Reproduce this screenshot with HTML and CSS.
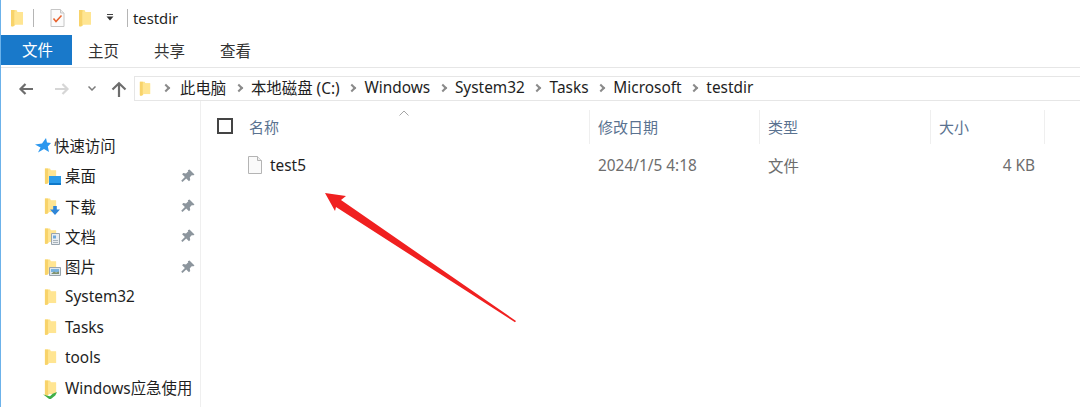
FILE: index.html
```html
<!DOCTYPE html>
<html lang="zh-CN">
<head>
    <meta charset="UTF-8">
    <title>testdir</title>
    <link rel="stylesheet" href="styles.css">
</head>
<body>

<svg class="defs" width="0" height="0">
    <defs>
        <symbol id="folder" viewBox="0 0 14 18">
            <path d="M1 1h5.500l1 2h5.500v12.500h-7.500l-2 2h-1.500l-1-.5z" fill="#fde58f"/>
            <path d="M1 1h3.500v15.500l-2.500 1-1-.5z" fill="#f8d36a"/>
            <path d="M4.500 3h8.500v12.500h-8.500z" fill="#ffe592"/>
        </symbol>
        <symbol id="pin" viewBox="0 0 14 14">
            <path d="M8.500 .5l5 5-1.500 1-1-.5-2.200 2.300.4 2.700-1.200 1.200-2.800-2.800-3.700 3.700-1.300-1.300 3.700-3.700-2.800-2.800 1.200-1.200 2.700.4 2.300-2.200-.5-1z" fill="#8c959d"/>
        </symbol>
    </defs>
</svg>

<div class="title-bar">
    <svg class="tb-folder"><use href="#folder"/></svg>
    <span class="tb-sep"></span>
    <svg class="tb-check" viewBox="0 0 15 18">
        <path d="M1 .5h9.500l3.500 3.500v13.500h-13z" fill="#fbfbfb" stroke="#c6c6c6"/>
        <path d="M10.500 .5v3.500h3.500" fill="#eee" stroke="#c6c6c6"/>
        <path d="M3.500 9.500l2.500 3 5.500-6" fill="none" stroke="#e8622d" stroke-width="1.500"/>
    </svg>
    <svg class="tb-folder2"><use href="#folder"/></svg>
    <svg class="tb-drop" viewBox="0 0 8 7">
        <path d="M1 .5h6" stroke="#444" stroke-width="1"/>
        <path d="M.5 2.500h7l-3.500 4z" fill="#333"/>
    </svg>
    <span class="tb-sep tb-sep-last"></span>
    <span class="tb-name">testdir</span>
</div>

<div class="ribbon">
    <div class="tab tab-file">文件</div>
    <div class="tab">主页</div>
    <div class="tab">共享</div>
    <div class="tab">查看</div>
</div>

<div class="nav-row">
    <svg class="nav-btn" viewBox="0 0 15 12">
        <path d="M15 6H2.500M7.500 1L2.500 6l5 5" fill="none" stroke="#6d6d6d" stroke-width="2.200"/>
    </svg>
    <svg class="nav-btn nav-forward" viewBox="0 0 15 12">
        <path d="M0 6h12.500M7.500 1l5 5-5 5" fill="none" stroke="#d6d6d6" stroke-width="2.200"/>
    </svg>
    <svg class="nav-down" viewBox="0 0 8 5">
        <path d="M.5 .5L4 4 7.500 .5" fill="none" stroke="#7c7c7c" stroke-width="1.500"/>
    </svg>
    <svg class="nav-up" viewBox="0 0 16 16">
        <path d="M8 16V2.500M1.500 8.500L8 2.200l6.500 6.300" fill="none" stroke="#6d6d6d" stroke-width="2.200"/>
    </svg>
    <div class="address">
        <svg class="addr-folder"><use href="#folder"/></svg>
        <span class="crumb-arrow crumb-first"></span>
        <span class="crumb">此电脑</span>
        <span class="crumb-arrow"></span>
        <span class="crumb">本地磁盘 (C:)</span>
        <span class="crumb-arrow"></span>
        <span class="crumb">Windows</span>
        <span class="crumb-arrow"></span>
        <span class="crumb">System32</span>
        <span class="crumb-arrow"></span>
        <span class="crumb">Tasks</span>
        <span class="crumb-arrow"></span>
        <span class="crumb">Microsoft</span>
        <span class="crumb-arrow"></span>
        <span class="crumb">testdir</span>
    </div>
</div>

<div class="main">
    <div class="sidebar">
        <div class="side-item side-head">
            <svg class="side-star" viewBox="0 0 16 15">
                <path d="M11 0l1 4.500 4 .5-3.200 3.500L14 14l-5-3-6 3.500 2.500-5L0 6.500l7-1z" fill="#2b97ee"/>
            </svg>
            <span>快速访问</span>
        </div>
        <div class="side-item">
            <span class="side-icon">
                <svg class="side-folder"><use href="#folder"/></svg>
                <svg class="badge" viewBox="0 0 12 9"><path d="M0 0h12v9H0z" fill="#2c9cea"/><path d="M0 7h12v2H0z" fill="#0e78c9"/></svg>
            </span>
            <span>桌面</span>
            <svg class="side-pin"><use href="#pin"/></svg>
        </div>
        <div class="side-item">
            <span class="side-icon">
                <svg class="side-folder"><use href="#folder"/></svg>
                <svg class="badge" viewBox="0 0 12 10"><path d="M4 0h4v4h3.500L6 10 .5 4H4z" fill="#2f86d8"/></svg>
            </span>
            <span>下载</span>
            <svg class="side-pin"><use href="#pin"/></svg>
        </div>
        <div class="side-item">
            <span class="side-icon">
                <svg class="side-folder"><use href="#folder"/></svg>
                <svg class="badge badge-doc" viewBox="0 0 9 12"><path d="M.5 .5h8v11h-8z" fill="#e9edf1" stroke="#98a4ae"/><path d="M2 2.500h3v3H2z" fill="#6fa8d8"/><path d="M2 7.500h5M2 9.500h5" stroke="#a9b3bb"/></svg>
            </span>
            <span>文档</span>
            <svg class="side-pin"><use href="#pin"/></svg>
        </div>
        <div class="side-item">
            <span class="side-icon">
                <svg class="side-folder"><use href="#folder"/></svg>
                <svg class="badge" viewBox="0 0 12 9"><path d="M.5 .5h11v8H.5z" fill="#dfe7ee" stroke="#9aa5ad"/><path d="M2 2h8v3H2z" fill="#79b3e0"/><path d="M2 7l3-2.500 2 1 3-1V7z" fill="#7f9270"/></svg>
            </span>
            <span>图片</span>
            <svg class="side-pin"><use href="#pin"/></svg>
        </div>
        <div class="side-item">
            <span class="side-icon"><svg class="side-folder"><use href="#folder"/></svg></span>
            <span>System32</span>
        </div>
        <div class="side-item">
            <span class="side-icon"><svg class="side-folder"><use href="#folder"/></svg></span>
            <span>Tasks</span>
        </div>
        <div class="side-item">
            <span class="side-icon"><svg class="side-folder"><use href="#folder"/></svg></span>
            <span>tools</span>
        </div>
        <div class="side-item">
            <span class="side-icon">
                <svg class="side-folder"><use href="#folder"/></svg>
                <svg class="badge badge-share" viewBox="0 0 16 8"><path d="M0 3l4 1.500 4 1 3-3 5-2-2 4-5 4H7z" fill="#3fae49"/></svg>
            </span>
            <span>Windows应急使用</span>
        </div>
    </div>

    <div class="content">
        <div class="list-head">
            <div class="col col-name">
                <span class="checkbox"></span>
                <span>名称</span>
                <svg class="sort-mark" viewBox="0 0 10 6"><path d="M.5 5.500L5 1l4.500 4.500" fill="none" stroke="#a5a5a5"/></svg>
            </div>
            <div class="col">修改日期</div>
            <div class="col">类型</div>
            <div class="col">大小</div>
            <div class="col-end"></div>
        </div>
        <div class="list-row">
            <div class="cell cell-name">
                <svg class="file-icon" viewBox="0 0 14 18">
                    <path d="M.5 .5h9l4 4v13H.5z" fill="#fafafa" stroke="#b4b4b4"/>
                    <path d="M9.500 .5v4h4" fill="#eee" stroke="#b4b4b4"/>
                </svg>
                <span>test5</span>
            </div>
            <div class="cell">2024/1/5 4:18</div>
            <div class="cell">文件</div>
            <div class="cell cell-size">4 KB</div>
        </div>
    </div>
</div>

<svg class="big-arrow" viewBox="0 0 1080 407">
    <path d="M325 193l21 3-5 4L516 321l-1 1.200L336 207l-1 4z" fill="#f02020"/>
</svg>

</body>
</html>
```

FILE: styles.css
```css
* {
    box-sizing: border-box;
}
html, body {
    height: 100%;
}
body {
    margin: 0;
    background-color: white;
    border-left: 1px solid #6cb2ea;
    font-family: "Noto Sans", "Noto Sans CJK SC", sans-serif;
    font-size: 15.400px;
    color: #1e1e1e;
    overflow: hidden;
    position: relative;
}
.defs {
    position: absolute;
}

/* title bar */
.title-bar {
    height: 35px;
    display: flex;
    align-items: center;
    padding-left: 9px;
}
.tb-folder, .tb-folder2 {
    width: 14px;
    height: 18px;
}
.tb-sep {
    width: 1px;
    height: 18px;
    background-color: #b5b5b5;
    margin-left: 9px;
    margin-right: 16px;
}
.tb-check {
    width: 15px;
    height: 18px;
}
.tb-folder2 {
    margin-left: 13px;
}
.tb-drop {
    width: 8px;
    height: 7px;
    margin-left: 14px;
}
.tb-sep-last {
    margin-left: 13px;
    margin-right: 5px;
}
.tb-name {
    font-size: 14.800px;
    line-height: 18px;
}

/* ribbon tabs */
.ribbon {
    height: 33px;
    display: flex;
    align-items: flex-start;
    border-bottom: 1px solid #e6e6e6;
    font-size: 15.500px;
    color: #333;
}
.tab {
    width: 66px;
    height: 30px;
    line-height: 32px;
    text-align: center;
}
.tab-file {
    width: 72px;
    margin-left: -1px;
    margin-right: -1.500px;
    padding-left: 3px;
    line-height: 30px;
    background-color: #1979ca;
    color: white;
}

/* back, forward, up and address */
.nav-row {
    height: 33px;
    display: flex;
    align-items: center;
    padding-left: 17px;
    padding-top: 8px;
}
.nav-btn {
    width: 15px;
    height: 12px;
}
.nav-forward {
    margin-left: 22px;
}
.nav-down {
    width: 8px;
    height: 5px;
    margin-left: 18px;
}
.nav-up {
    width: 16px;
    height: 16px;
    margin-left: 15px;
}
.address {
    flex: 1;
    height: 25px;
    margin-left: 7px;
    display: flex;
    align-items: center;
    padding-left: 4px;
    padding-bottom: 2px;
    border: 1px solid #e6e6e6;
    border-right: none;
}
.addr-folder {
    width: 12px;
    height: 17px;
    margin-top: 2px;
    margin-right: 5px;
}
.crumb-arrow {
    width: 6px;
    height: 6px;
    margin: 0 9.400px;
    border-top: 2px solid #8a8a8a;
    border-right: 2px solid #8a8a8a;
    transform: rotate(45deg);
}
.crumb-first {
    margin: 0 11px 0 7px;
}
.crumb {
    white-space: nowrap;
}

/* sidebar */
.main {
    display: flex;
    height: calc(100% - 101px);
}
.sidebar {
    width: 200px;
    padding-top: 29.500px;
    border-right: 1px solid #efefef;
}
.side-item {
    height: 30.250px;
    display: flex;
    align-items: center;
    padding-left: 43px;
    position: relative;
    white-space: nowrap;
}
.side-head {
    padding-left: 34px;
}
.side-star {
    width: 16px;
    height: 15px;
    margin-right: 3px;
}
.side-icon {
    width: 21px;
    height: 18px;
    position: relative;
    flex-shrink: 0;
}
.side-folder {
    width: 13px;
    height: 18px;
    display: block;
}
.badge {
    position: absolute;
    left: 5px;
    bottom: 0;
    width: 12px;
    height: 9px;
}
.badge-doc {
    width: 9px;
    height: 12px;
    left: 7px;
}
.badge-share {
    left: -1px;
    bottom: -2px;
    width: 14px;
    height: 8px;
}
.side-pin {
    position: absolute;
    left: 180px;
    top: 8px;
    width: 14px;
    height: 14px;
}

/* file list */
.content {
    flex: 1;
    padding-top: 9px;
}
.list-head, .list-row {
    display: grid;
    grid-template-columns: 389px 170px 171px 114px 1fr;
}
.list-head {
    height: 34px;
    color: #5a7290;
    font-size: 15px;
}
.col {
    display: flex;
    align-items: center;
    padding-left: 8px;
    padding-bottom: 2px;
    border-right: 1px solid #efefef;
    position: relative;
}
.col-name {
    padding-left: 16px;
}
.checkbox {
    width: 16px;
    height: 16px;
    border: 2px solid #444;
    margin-right: 16px;
}
.sort-mark {
    position: absolute;
    left: 198px;
    top: 0;
    width: 10px;
    height: 6px;
}
.list-row {
    height: 30px;
    margin-top: 6px;
    color: #6d6d6d;
}
.cell {
    display: flex;
    align-items: center;
    padding-left: 8px;
}
.cell-name {
    padding-left: 47px;
    color: #1e1e1e;
}
.file-icon {
    width: 14px;
    height: 18px;
    margin-right: 8px;
}
.cell-size {
    justify-content: flex-end;
    padding-right: 10px;
}

/* red arrow drawn over the window */
.big-arrow {
    position: absolute;
    left: -1px;
    top: 0;
    width: 1080px;
    height: 407px;
    pointer-events: none;
}
```
